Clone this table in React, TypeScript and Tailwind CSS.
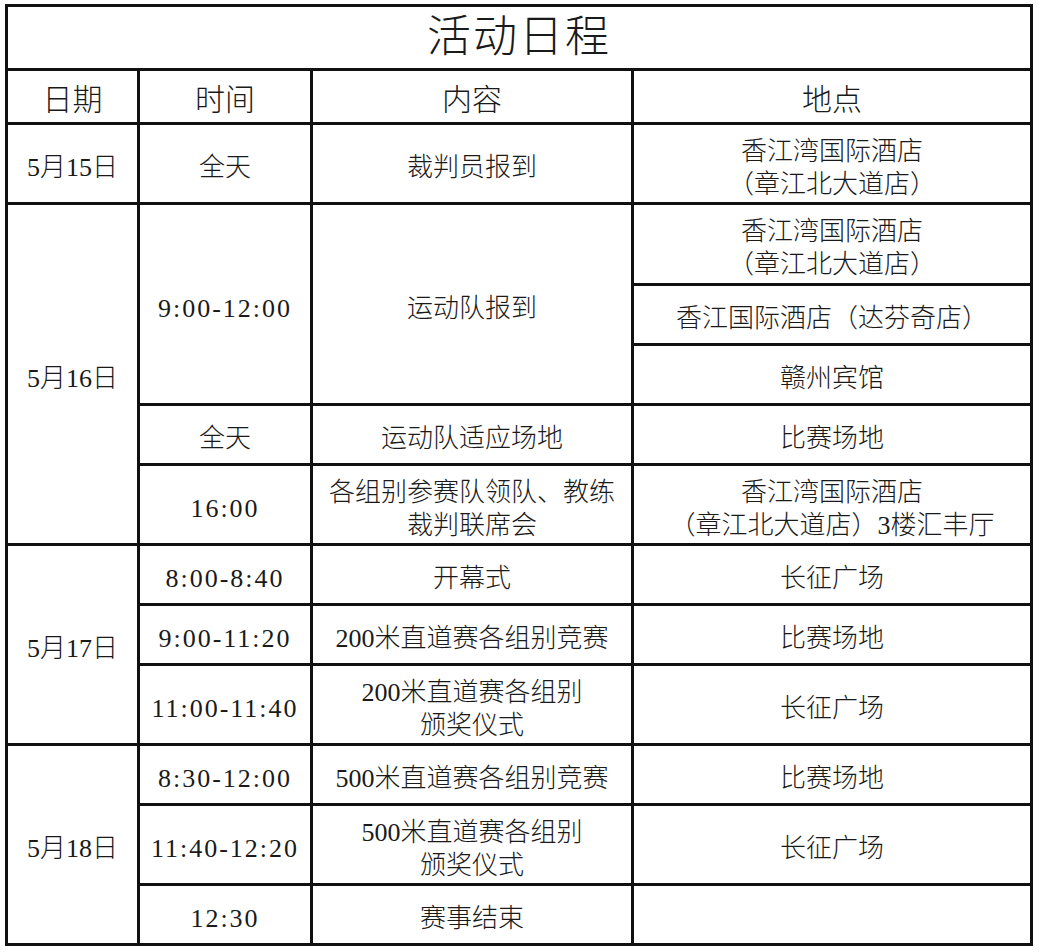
const cell = "bg-white flex flex-col items-center justify-center text-center leading-[33px]";

type Row = { time: string; content: string[]; place: string[] };

const Cell = ({ lines, className = "" }: { lines: string[]; className?: string }) => (
  <div className={`${cell} pt-[8px] ${className}`}>
    {lines.map((l, i) => (
      <span key={i}>{l}</span>
    ))}
  </div>
);

const day17: Row[] = [
  { time: "8:00-8:40", content: ["开幕式"], place: ["长征广场"] },
  { time: "9:00-11:20", content: ["200米直道赛各组别竞赛"], place: ["比赛场地"] },
  { time: "11:00-11:40", content: ["200米直道赛各组别", "颁奖仪式"], place: ["长征广场"] },
];

const day18: Row[] = [
  { time: "8:30-12:00", content: ["500米直道赛各组别竞赛"], place: ["比赛场地"] },
  { time: "11:40-12:20", content: ["500米直道赛各组别", "颁奖仪式"], place: ["长征广场"] },
  { time: "12:30", content: ["赛事结束"], place: [] },
];

export default function App() {
  return (
    <div
      className="w-[1040px] h-[952px] bg-white pt-[4px] pl-[5px] text-[26px] text-[#1a1a1a]"
      style={{ fontFamily: '"Liberation Serif", "Noto Sans CJK SC", serif' }}
    >
      <div className="grid w-[1028px] grid-cols-[129px_170px_318px_396px] grid-rows-[61px_51px_77px_78px_57px_57px_57px_77px_57px_57px_77px_57px_77px_57px] gap-[3px] bg-[#111] p-[3px] font-light">
        {/* title */}
        <div className={`${cell} col-span-4 text-[44px] tracking-[2px]`}>活动日程</div>

        {/* header */}
        <Cell lines={["日期"]} className="text-[30px] !pt-[5px]" />
        <Cell lines={["时间"]} className="text-[30px] !pt-[5px]" />
        <Cell lines={["内容"]} className="text-[30px] !pt-[5px]" />
        <Cell lines={["地点"]} className="text-[30px] !pt-[5px]" />

        {/* 5/15 */}
        <Cell lines={["5月15日"]} />
        <Cell lines={["全天"]} />
        <Cell lines={["裁判员报到"]} />
        <Cell lines={["香江湾国际酒店", "（章江北大道店）"]} />

        {/* 5/16 */}
        <Cell lines={["5月16日"]} className="row-span-5" />
        <Cell lines={["9:00-12:00"]} className="row-span-3 tracking-[2px]" />
        <Cell lines={["运动队报到"]} className="row-span-3" />
        <Cell lines={["香江湾国际酒店", "（章江北大道店）"]} />
        <Cell lines={["香江国际酒店（达芬奇店）"]} />
        <Cell lines={["赣州宾馆"]} />
        <Cell lines={["全天"]} />
        <Cell lines={["运动队适应场地"]} />
        <Cell lines={["比赛场地"]} />
        <Cell lines={["16:00"]} className="tracking-[2px]" />
        <Cell lines={["各组别参赛队领队、教练", "裁判联席会"]} />
        <Cell lines={["香江湾国际酒店", "（章江北大道店）3楼汇丰厅"]} />

        {/* 5/17 */}
        <Cell lines={["5月17日"]} className="row-span-3" />
        {day17.map((r) => (
          <>
            <Cell key={r.time} lines={[r.time]} className="tracking-[2px]" />
            <Cell lines={r.content} />
            <Cell lines={r.place} />
          </>
        ))}

        {/* 5/18 */}
        <Cell lines={["5月18日"]} className="row-span-3" />
        {day18.map((r) => (
          <>
            <Cell key={r.time} lines={[r.time]} className="tracking-[2px]" />
            <Cell lines={r.content} />
            <Cell lines={r.place} />
          </>
        ))}
      </div>
    </div>
  );
}
